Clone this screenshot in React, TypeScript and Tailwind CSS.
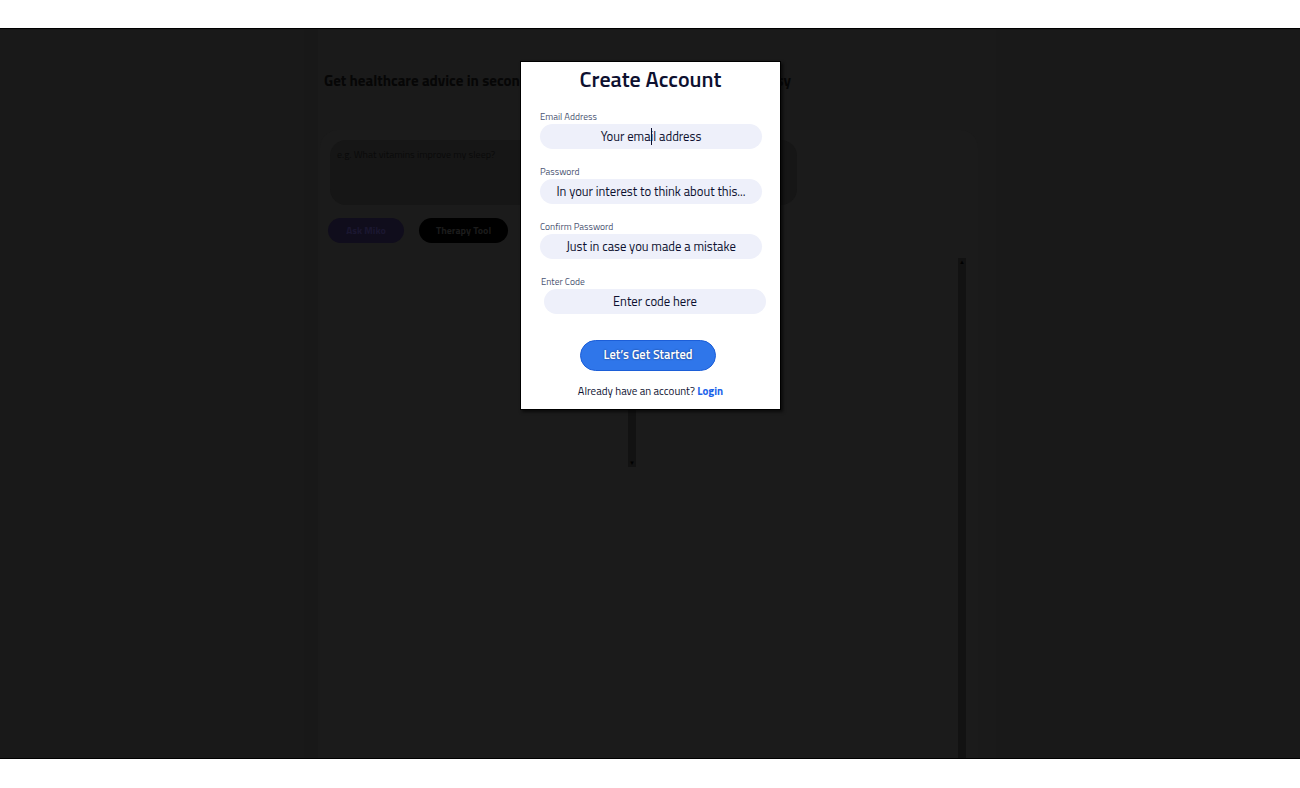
import React from 'react';

const FONT = { fontFamily: '"Titillium Web", Lato, "Noto Sans", sans-serif' };

function Field({
  label,
  placeholder,
  shift = false,
  caret = false,
  type = 'text',
}: {
  label: string;
  placeholder: string;
  shift?: boolean;
  caret?: boolean;
  type?: string;
}) {
  return (
    <div className={shift ? 'pl-[1px]' : ''}>
      <label className="block text-[9.5px] leading-[11px] text-[#4b5472] mb-[2px]">{label}</label>
      <div className={`relative ${shift ? 'ml-[3px]' : ''}`}>
        <input
          type={type}
          placeholder={placeholder}
          className="block w-[222px] h-[25px] rounded-full bg-[#eef0fa] text-center text-[12.7px] text-[#0d1030] placeholder:text-[#0d1030] outline-none"
        />
        {caret && <span className="absolute left-[111px] top-[4px] h-[17px] w-px bg-[#0d1030]" />}
      </div>
    </div>
  );
}

function SignupModal() {
  return (
    <div className="absolute left-[520px] top-[32px] w-[261px] h-[349px] bg-white border border-black shadow-[2px_2px_3px_rgba(0,0,0,0.6)] px-[19px] pt-[2px]">
      <h2 className="text-center text-[22px] leading-[30px] font-semibold text-[#0d1030]">Create Account</h2>
      <div className="mt-[17px] flex flex-col gap-[17px]">
        <Field label="Email Address" placeholder="Your email address" caret />
        <Field label="Password" placeholder="In your interest to think about this..." type="password" />
        <Field label="Confirm Password" placeholder="Just in case you made a mistake" type="password" />
        <Field label="Enter Code" placeholder="Enter code here" shift />
      </div>
      <div className="mt-[26px] flex justify-center">
        <button className="w-[136px] h-[31px] rounded-full bg-[#2f76ea] border border-[#1c5ed8] text-white text-[12.5px] font-semibold [text-shadow:0_0_2px_rgba(0,0,40,0.6)] -ml-[5px]">
          Let’s Get Started
        </button>
      </div>
      <p className="mt-[12px] text-center text-[11px] leading-[16px] text-[#0d1030]">
        Already have an account? <a className="font-bold text-[#1c63ea]">Login</a>
      </p>
    </div>
  );
}

export default function App() {
  return (
    <div className="w-[1300px] h-[788px] bg-white overflow-hidden" style={FONT}>
      <div className="h-[28px]" />
      <div className="relative h-[731px] bg-[#191919] border-y border-black flex justify-center">
        <div className="w-[692px] h-full bg-[#1a1a1a] border-l-[14px] border-[#181818] flex flex-col pl-[2px] pr-[18px]">
          <h1 className="mt-[42px] pl-[4px] text-[15px] leading-[20px] font-bold text-[#060606] whitespace-nowrap">
            Get healthcare advice in seconds, simple, private and fast, and very easy
          </h1>
          <div className="mt-[39px] flex-1 rounded-t-[18px] bg-[#1b1b1b] pl-[10px] pt-[10px] flex flex-col relative">
            <div className="w-[467px] h-[65px] rounded-[16px] bg-[#161616] px-[7px] pt-[7px] text-[10px] text-[#0a0a0a]">
              e.g. What vitamins improve my sleep?
            </div>
            <div className="mt-[13px] flex gap-[15px] -ml-[2px]">
              <button className="w-[76px] h-[25px] rounded-full bg-[#100d1c] text-[10px] font-bold text-[#1b1730]">Ask Miko</button>
              <button className="w-[89px] h-[25px] rounded-full bg-black text-[10px] font-bold text-[#1c1c1c]">Therapy Tool</button>
            </div>
            <div className="flex flex-1 mt-[15px]">
              <div className="w-[298px]" />
              <div className="w-[8px] h-[209px] bg-[#121212] flex flex-col items-center justify-between py-[1px]">
                <span className="text-[6px] leading-[6px] text-black">▲</span>
                <span className="text-[6px] leading-[6px] text-black">▼</span>
              </div>
              <div className="flex-1" />
              <div className="w-[8px] mr-[12px] bg-[#121212] flex flex-col items-center pt-[1px]">
                <span className="text-[6px] leading-[6px] text-black">▲</span>
              </div>
            </div>
          </div>
        </div>
        <SignupModal />
      </div>
    </div>
  );
}
